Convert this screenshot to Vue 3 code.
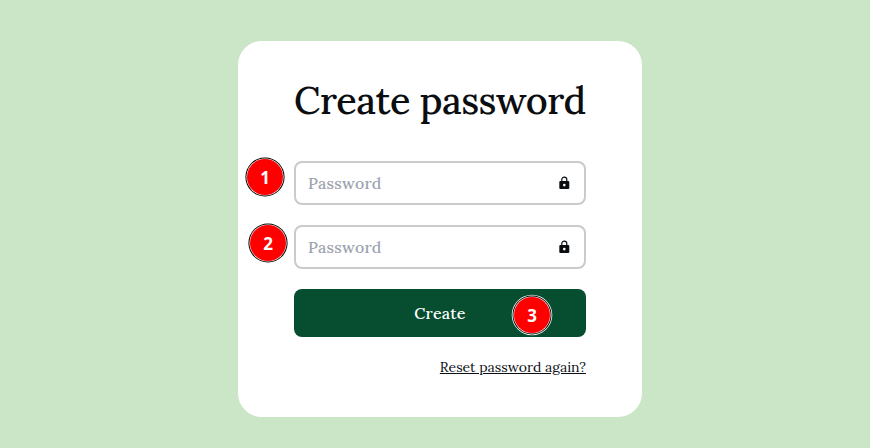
<script setup>
const fields = [
  { id: 'password', step: 1 },
  { id: 'confirm', step: 2 },
]
</script>

<template>
  <main class="page">
    <form class="card" @submit.prevent>
      <h1 class="title">Create password</h1>
      <div v-for="field in fields" :key="field.id" class="field">
        <span class="placeholder">Password</span>
        <svg class="lock" viewBox="0 0 12 14" width="12" height="14">
          <path d="M3.8 6V3.6a2.5 2.5 0 0 1 5 0V6" fill="none" stroke="#0b0e10" stroke-width="1.2" />
          <rect x="1.3" y="5" width="10" height="8.1" rx="1.1" fill="#0b0e10" />
          <circle cx="6.3" cy="9.1" r="1.3" fill="#fff" />
        </svg>
        <span class="badge" :class="'badge-' + field.step">{{ field.step }}</span>
      </div>
      <button class="submit" type="submit">
        <span class="label">Create</span>
        <span class="badge badge-3">3</span>
      </button>
      <a class="reset" href="#">Reset password again?</a>
    </form>
  </main>
</template>

<style>
body {
  background: #cbe6c6;
}
</style>

<style scoped>
.page {
  box-sizing: border-box;
  height: 448px;
  padding-top: 41px;
  display: flex;
  align-items: flex-start;
  justify-content: center;
  padding-left: 10px;
  font-family: Lora, "Liberation Serif", serif;
  color: #0b0e14;
}
.card {
  box-sizing: border-box;
  width: 404px;
  height: 376px;
  padding: 35px 56px 0;
  border-radius: 24px;
  background: #fff;
  display: flex;
  flex-direction: column;
}
.title {
  margin: 0 0 37px;
  font-size: 38px;
  line-height: 48px;
  font-weight: 500;
  letter-spacing: -0.45px;
  color: #0b0e10;
  white-space: nowrap;
}
.field {
  position: relative;
  box-sizing: border-box;
  height: 44px;
  margin-bottom: 20px;
  padding: 0 14px 0 12px;
  border: 2px solid #cbcbcb;
  border-radius: 8px;
  display: flex;
  align-items: center;
  justify-content: space-between;
}
.placeholder {
  font-size: 16px;
  font-weight: 500;
  letter-spacing: 0.25px;
  color: #9ca3af;
}
.submit {
  position: relative;
  height: 48px;
  padding: 0;
  border: 0;
  border-radius: 8px;
  background: #064e2f;
  color: #fff;
  font-family: inherit;
  font-size: 16px;
  font-weight: 500;
  letter-spacing: 0.25px;
}
.reset {
  align-self: flex-end;
  margin-top: 20px;
  font-size: 14px;
  line-height: 20px;
  color: inherit;
}
.badge {
  position: absolute;
  box-sizing: border-box;
  width: 36px;
  height: 36px;
  border: 0;
  border-radius: 50%;
  background: #f00;
  box-shadow: 0 0 0 0.6px #fff, 0 0 0 1.6px #000;
  color: #fff;
  font: 700 17px/37px "Noto Sans", "Open Sans", sans-serif;
  letter-spacing: 0;
  text-align: center;
}
.badge-1 {
  left: -49px;
  top: -4px;
}
.badge-2 {
  left: -46px;
  top: -2px;
}
.badge-3 {
  left: 220px;
  top: 8px;
  box-shadow: 0 0 0 0.6px #fff, 0 0 0 1.5px #000, 0 0 0 2.3px #fff;
}
</style>
